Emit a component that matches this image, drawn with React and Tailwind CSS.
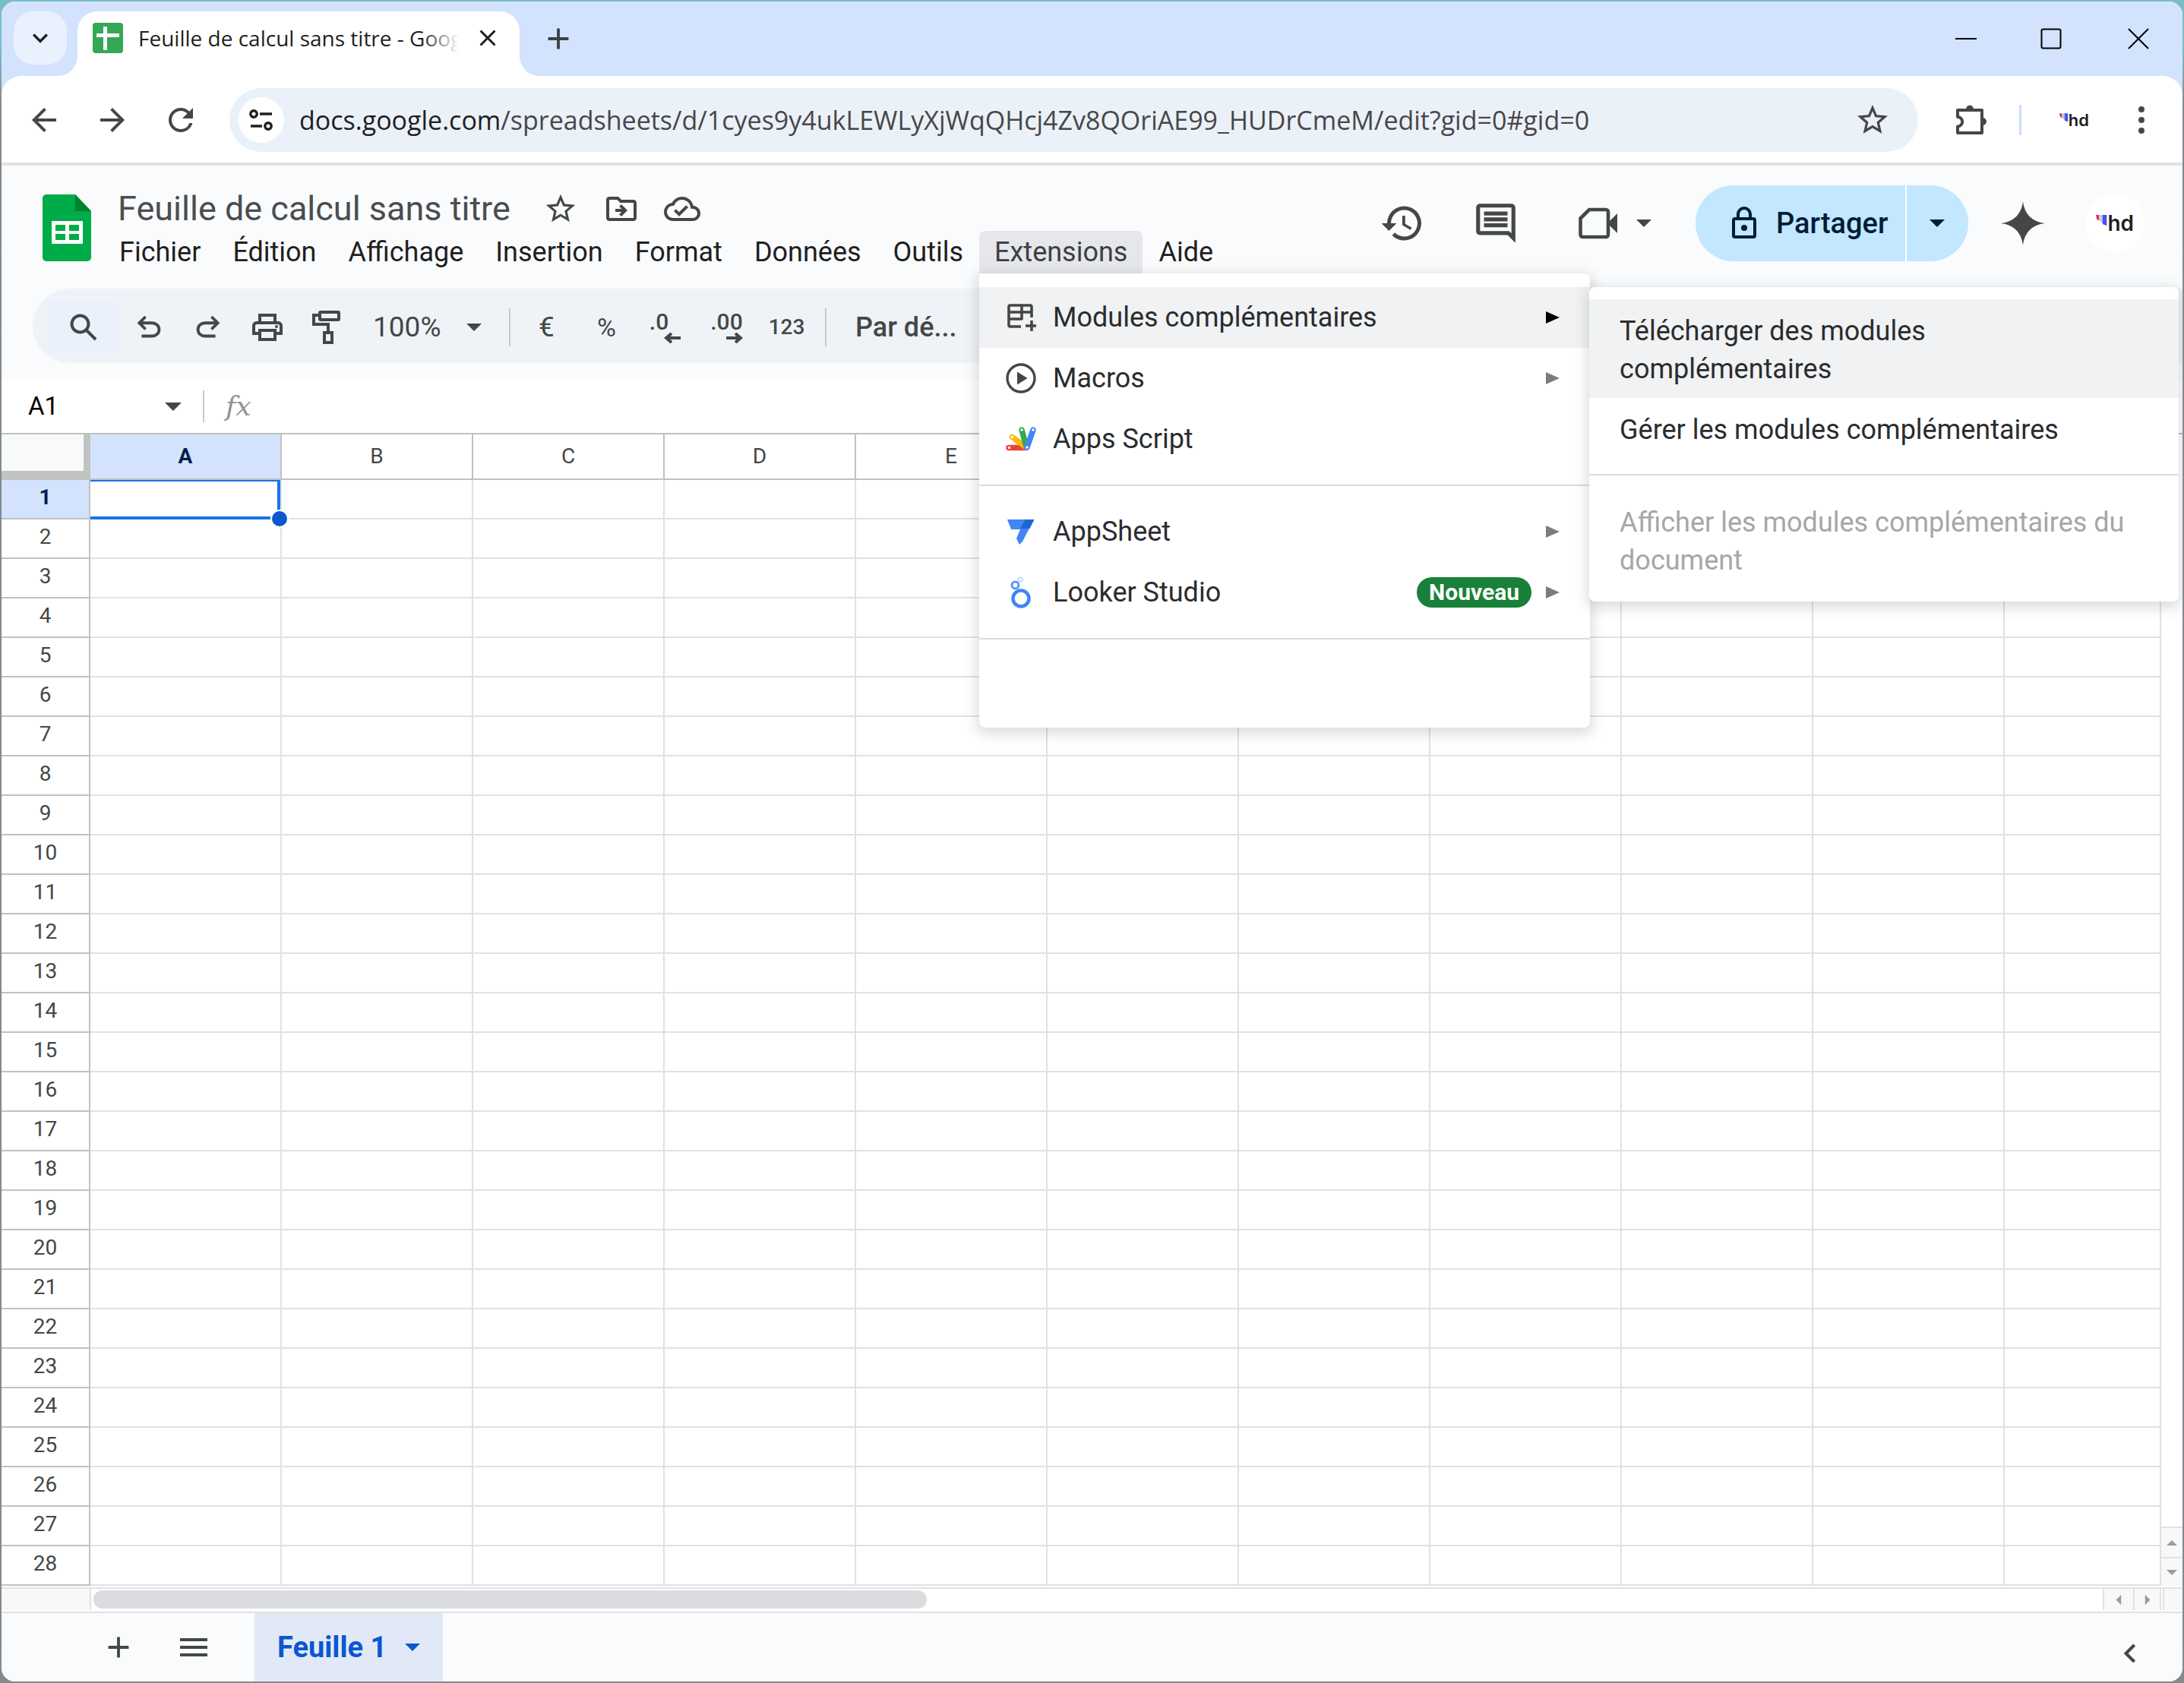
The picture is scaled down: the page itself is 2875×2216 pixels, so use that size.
import React from "react";
import {
  MdStarBorder,
  MdOutlineDriveFileMove,
  MdOutlineCloudDone,
  MdHistory,
  MdOutlineComment,
  MdOutlinePrint,
  MdAdd,
  MdMenu,
  MdArrowBack,
  MdArrowForward,
  MdRefresh,
  MdClose,
  MdChevronLeft,
  MdKeyboardArrowDown,
} from "react-icons/md";

const columns = ["A", "B", "C", "D", "E", "F", "G", "H", "I", "J", ""];
const rows = Array.from({ length: 28 }, (_, i) => i + 1);
const menus = ["Fichier", "Édition", "Affichage", "Insertion", "Format", "Données", "Outils"];

function Caret({ className = "w-5" }) {
  return (
    <svg viewBox="0 0 20 10" className={className} fill="currentColor" aria-hidden="true">
      <path d="M0 0h20L10 10z" />
    </svg>
  );
}

function Brand({ className, textClass }) {
  return (
    <span className={className}>
      <svg viewBox="0 0 14 24" className="h-[1em] w-[0.55em]" aria-hidden="true">
        <path d="M0 2h4v7L1 7z" fill="#e0344a" />
        <path d="M5 2h3v10L5 9z" fill="#b4c0f8" />
        <path d="M8 2h5v13l-5-2z" fill="#4454f0" />
      </svg>
      <span className={textClass}>hd</span>
    </span>
  );
}

function TabStrip() {
  return (
    <div className="flex h-[98px] items-stretch bg-[#d3e3fd] pl-4">
      <button aria-label="Rechercher dans les onglets" className="mt-[13px] flex h-[70px] w-[70px] items-center justify-center rounded-[26px] bg-[#e9f1fe] text-[#1f1f1f]">
        <MdKeyboardArrowDown className="size-10" />
      </button>
      <div className="relative ml-[14px] mt-[13px] flex w-[582px] items-center rounded-t-[26px] bg-white pb-4 pl-5 pr-6">
        <svg viewBox="0 0 26 26" className="absolute bottom-0 -left-[26px] w-[26px]" fill="#fff" aria-hidden="true">
          <path d="M26 0v26H0A26 26 0 0 0 26 0z" />
        </svg>
        <svg viewBox="0 0 26 26" className="absolute bottom-0 -right-[26px] w-[26px]" fill="#fff" aria-hidden="true">
          <path d="M0 0v26h26A26 26 0 0 1 0 0z" />
        </svg>
        <svg viewBox="0 0 40 40" className="w-10 shrink-0" aria-hidden="true">
          <rect width="40" height="40" rx="4" fill="#34a853" />
          <path d="M14 5h5v9h16v5H19v17h-5V19H5v-5h9z" fill="#fff" />
        </svg>
        <div className="relative ml-5 flex-1 overflow-hidden whitespace-nowrap font-['Open_Sans',sans-serif] text-[28px] leading-10 text-[#1f1f1f]">
          Feuille de calcul sans titre - Google Sheets
          <div className="absolute inset-y-0 right-0 w-12 bg-gradient-to-r from-white/0 to-white" />
        </div>
        <button aria-label="Fermer l'onglet" className="ml-5 text-[#1f1f1f]">
          <MdClose className="size-9" />
        </button>
      </div>
      <button aria-label="Nouvel onglet" className="ml-7 flex items-center text-[#3c4043]">
        <MdAdd className="size-[46px]" />
      </button>
      <div className="ml-auto flex items-center gap-[84px] pr-[44px] text-black">
        <button aria-label="Réduire">
          <svg viewBox="0 0 28 28" className="w-7"><path d="M0 14h28" stroke="currentColor" strokeWidth="2" /></svg>
        </button>
        <button aria-label="Agrandir">
          <svg viewBox="0 0 28 28" className="w-7"><rect x="1.5" y="1.5" width="25" height="25" rx="2" fill="none" stroke="currentColor" strokeWidth="2" /></svg>
        </button>
        <button aria-label="Fermer" className="ml-[3px]">
          <svg viewBox="0 0 28 28" className="w-7"><path d="M1 1l26 26M27 1L1 27" stroke="currentColor" strokeWidth="2" /></svg>
        </button>
      </div>
    </div>
  );
}

function AddressBar() {
  return (
    <div className="bg-[#d3e3fd]">
      <div className="flex h-[118px] items-center rounded-t-[26px] border-b-4 border-[#dfe2e1] bg-white pl-8 pr-8 pt-[2px] text-[#454746]">
        <button aria-label="Retour" className="mr-[42px]"><MdArrowBack className="size-12" /></button>
        <button aria-label="Avancer" className="mr-[42px]"><MdArrowForward className="size-12" /></button>
        <button aria-label="Actualiser" className="mr-[40px]"><MdRefresh className="size-12" /></button>
        <div className="flex h-[84px] flex-1 items-center rounded-full bg-[#ebf1f9] pl-3 pr-9">
          <button aria-label="Informations sur le site" className="flex size-[60px] items-center justify-center rounded-full bg-white text-[#1f1f1f]">
            <svg viewBox="0 0 32 32" className="w-8" fill="none" stroke="currentColor" strokeWidth="3.4">
              <circle cx="6" cy="8" r="4.2" />
              <path d="M14 8h16M2 24h15" />
              <circle cx="25" cy="24" r="4.2" />
            </svg>
          </button>
          <button className="ml-5 flex-1 whitespace-nowrap text-left font-['Open_Sans',sans-serif] text-[34px] leading-[48px] text-[#474747]">
            <span className="text-[#1f1f1f]">docs.google.com</span>/spreadsheets/d/1cyes9y4ukLEWLyXjWqQHcj4Zv8QOriAE99_HUDrCmeM/edit?gid=0#gid=0
          </button>
          <button aria-label="Ajouter aux favoris"><MdStarBorder className="size-[48px]" /></button>
        </div>
        <button aria-label="Extensions du navigateur" className="ml-[47px]">
          <svg viewBox="0 0 44 44" className="w-11">
            <path d="M5 9h32v30H5v-8.500a5 5 0 0 0 0-12.500z" fill="none" stroke="currentColor" strokeWidth="4" strokeLinejoin="round" />
            <path d="M16 8a5 5.500 0 0 1 10 0zM38 19a5 5 0 0 1 0 10z" fill="currentColor" />
          </svg>
        </button>
        <div className="ml-[42px] h-10 w-[3px] bg-[#c8dcfb]" />
        <button aria-label="Profil" className="ml-[50px]">
          <Brand className="flex items-center text-[22px] leading-6" textClass="font-['Inter',sans-serif] font-semibold text-[#1f1f1f]" />
        </button>
        <button aria-label="Menu du navigateur" className="ml-[47px]">
          <svg viewBox="0 0 44 44" className="w-11" fill="currentColor"><circle cx="22" cy="8" r="4" /><circle cx="22" cy="22" r="4" /><circle cx="22" cy="36" r="4" /></svg>
        </button>
      </div>
    </div>
  );
}

function SheetsLogo() {
  return (
    <svg viewBox="0 0 64 88" className="w-16" aria-hidden="true">
      <path d="M5 0h38l21 22v61a5 5 0 0 1-5 5H5a5 5 0 0 1-5-5V5a5 5 0 0 1 5-5z" fill="#00ac47" />
      <path d="M43 0l21 22H43z" fill="#00832d" />
      <path d="M12 35h41v30H12zM17 40v8h13v-8zm18 0v8h13v-8zM17 52v8h13v-8zm18 0v8h13v-8z" fill="#fff" fillRule="evenodd" />
    </svg>
  );
}

function ModulesIcon() {
  return (
    <svg viewBox="0 0 40 40" className="w-10" fill="none" stroke="#444746" strokeWidth="3.600" strokeLinejoin="round">
      <path d="M34 20V6a2 2 0 0 0-2-2H6a2 2 0 0 0-2 2v24a2 2 0 0 0 2 2h14M4 13h30M4 22h17V4" />
      <path d="M34 24v14M26 31h14" />
    </svg>
  );
}
function MacrosIcon() {
  return (
    <svg viewBox="0 0 40 40" className="w-10">
      <circle cx="20" cy="20" r="18" fill="none" stroke="#444746" strokeWidth="3.400" />
      <path d="M15 11.500v17L28.500 20z" fill="#444746" />
    </svg>
  );
}
function AppsScriptIcon() {
  return (
    <svg viewBox="0 0 40 40" className="w-10" strokeLinecap="round" strokeWidth="7.500">
      <path d="M4 31.500H26" stroke="#ea4335" />
      <path d="M8.500 17.500l18 13" stroke="#fbbc04" />
      <path d="M21 8l6 22" stroke="#34a853" />
      <path d="M36 8l-8 23" stroke="#4285f4" />
      <g fill="#fff"><circle cx="4.500" cy="31.500" r="1.800" /><circle cx="8.500" cy="17.500" r="1.800" /><circle cx="21" cy="8" r="1.800" /><circle cx="36" cy="8" r="1.800" /><circle cx="28" cy="31" r="1.800" /></g>
    </svg>
  );
}
function AppSheetIcon() {
  return (
    <svg viewBox="0 0 40 40" className="w-10">
      <path d="M2 4h35L22 33l-4 4-4-8 5-12H7z" fill="#4285f4" />
      <path d="M26 4h11.500l-6 12H19z" fill="#1967d2" />
    </svg>
  );
}
function LookerIcon() {
  return (
    <svg viewBox="0 0 40 44" className="w-10" fill="none">
      <circle cx="20" cy="30" r="10.500" stroke="#4285f4" strokeWidth="4.500" />
      <circle cx="12.500" cy="12.500" r="4.500" stroke="#5e97f6" strokeWidth="3" />
      <circle cx="19" cy="5" r="2.800" stroke="#c6dafc" strokeWidth="2" />
    </svg>
  );
}

function MenuItem({ icon, label, arrow, active, badge, children }) {
  return (
    <li className="relative">
      <button className={active ? "flex h-20 w-full items-center bg-[#f0f2f3] pl-[35px] pr-[39px] text-left" : "flex h-20 w-full items-center bg-white pl-[35px] pr-[39px] text-left"}>
        {icon}
        <span className="ml-[22px] flex-1">{label}</span>
        {badge && <span className="mr-[18px] flex h-10 items-center rounded-full bg-[#188038] px-4 text-[30px] font-bold text-white">{badge}</span>}
        {arrow && (
          <svg viewBox="0 0 20 18" className="w-5" fill={active ? "#000" : "#7c7c7c"} aria-hidden="true"><path d="M1 1l18 8-18 8z" /></svg>
        )}
      </button>
      {children}
    </li>
  );
}

function ExtensionsMenu() {
  return (
    <ul className="absolute left-0 top-full z-20 w-[804px] rounded-b-lg rounded-tr-lg bg-white pb-[116px] pt-[18px] text-[36px] leading-[50px] text-[#2b2c2e] shadow-[0_5px_16px_4px_rgba(60,64,67,0.17)]">
      <MenuItem icon={<ModulesIcon />} label="Modules complémentaires" arrow active>
        <ul className="absolute left-[803px] top-0 z-30 w-[776px] rounded-lg bg-white py-4 shadow-[0_5px_16px_4px_rgba(60,64,67,0.17)]">
          <li><button className="w-full bg-[#f0f2f3] pb-[13px] pl-10 pr-[60px] pt-[17px] text-left">Télécharger des modules<br />complémentaires</button></li>
          <li><button className="w-full pb-[13px] pl-10 pt-[17px] text-left">Gérer les modules complémentaires</button></li>
          <li className="my-5 h-[2px] bg-[#dadce0]" />
          <li><button disabled className="w-full pb-[13px] pl-10 pr-10 pt-[17px] text-left text-[#a5a7a8]">Afficher les modules complémentaires du document</button></li>
        </ul>
      </MenuItem>
      <MenuItem icon={<MacrosIcon />} label="Macros" arrow />
      <MenuItem icon={<AppsScriptIcon />} label="Apps Script" />
      <li className="my-5 h-[2px] bg-[#dadce0]" />
      <MenuItem icon={<AppSheetIcon />} label="AppSheet" arrow />
      <MenuItem icon={<LookerIcon />} label="Looker Studio" badge="Nouveau" arrow />
      <li className="mt-5 h-[2px] bg-[#dadce0]" />
    </ul>
  );
}

function DocHeader() {
  return (
    <div className="flex h-[162px] items-start pl-[54px] pr-[50px] text-[#444746]">
      <div className="pt-[38px]"><SheetsLogo /></div>
      <div className="ml-4 pt-[28px]">
        <div className="flex h-[58px] items-center pl-[19px]">
          <input aria-label="Titre du document" defaultValue="Feuille de calcul sans titre" className="w-[560px] bg-transparent text-[45px] leading-[58px] text-[#4b4d4f] outline-none" />
          <button aria-label="Ajouter aux favoris"><MdStarBorder className="size-[46px]" /></button>
          <button aria-label="Déplacer" className="ml-[33px]"><MdOutlineDriveFileMove className="size-[48px]" /></button>
          <button aria-label="Enregistré dans Drive" className="ml-8"><MdOutlineCloudDone className="size-[48px]" /></button>
        </div>
        <nav className="flex h-[56px] text-[36px] leading-[56px] text-[#1f1f1f]">
          {menus.map((m) => (
            <button key={m} className="px-[21px]">{m}</button>
          ))}
          <div className="relative">
            <button className="h-full rounded-t-lg bg-[#e6e7ea] px-5 text-[#3c4043]">Extensions</button>
            <ExtensionsMenu />
          </div>
          <button className="px-[21px]">Aide</button>
        </nav>
      </div>
      <div className="ml-auto mt-[26px] flex h-[100px] items-center">
        <button aria-label="Historique"><MdHistory className="size-[60px]" /></button>
        <button aria-label="Commentaires" className="ml-[62px]"><MdOutlineComment className="size-[62px]" /></button>
        <button aria-label="Visioconférence" className="ml-[78px] flex items-center">
          <svg viewBox="0 0 52 42" className="w-[52px]">
            <path d="M14 3h22a3 3 0 0 1 3 3v30a3 3 0 0 1-3 3H5.500a3 3 0 0 1-3-3V14.500z" fill="none" stroke="currentColor" strokeWidth="4.600" />
            <path d="M40 19l11-11v26L40 23z" fill="currentColor" />
          </svg>
          <Caret className="ml-6 w-5" />
        </button>
        <div className="ml-[58px] flex h-[100px] overflow-hidden rounded-full bg-[#c2e7ff] text-[#001d35]">
          <button className="flex w-[276px] items-center pl-[44px] text-[38px] font-medium">
            <svg viewBox="0 0 40 44" className="mr-[22px] w-10" fill="none" stroke="currentColor" strokeWidth="4">
              <rect x="6" y="16" width="28" height="24" rx="2" />
              <path d="M12 16v-6a8 8 0 0 1 16 0v6" />
              <circle cx="20" cy="28" r="4" fill="currentColor" stroke="none" />
            </svg>
            Partager
          </button>
          <button aria-label="Options de partage" className="flex w-[83px] items-center border-l-2 border-white pl-[30px]"><Caret className="w-5" /></button>
        </div>
        <button aria-label="Gemini" className="ml-[43px]">
          <svg viewBox="0 0 58 58" className="w-[58px]" fill="currentColor"><path d="M29 0c2 17 12 27 29 29-17 2-27 12-29 29C27 41 17 31 0 29 17 27 27 17 29 0z" /></svg>
        </button>
        <button aria-label="Compte" className="ml-[53px] flex size-[78px] items-center justify-center rounded-full bg-white">
          <Brand className="flex items-center text-[28px] leading-8" textClass="font-['Inter',sans-serif] font-semibold text-[#1f1f1f]" />
        </button>
      </div>
    </div>
  );
}

function Decimal({ text, right }) {
  return (
    <span className="flex flex-col items-end text-[30px] font-medium leading-[28px]">
      <span>{text}</span>
      <svg viewBox="0 0 22 14" className={right ? "w-[22px]" : "-mr-4 w-[22px]"} fill="none" stroke="currentColor" strokeWidth="4">
        {right ? <path d="M0 7h19M12 1l7 6-7 6" /> : <path d="M22 7H3M10 1L3 7l7 6" />}
      </svg>
    </span>
  );
}

function Toolbar() {
  return (
    <div className="ml-[41px] flex h-[98px] items-center rounded-l-full bg-[#eff3f8] pl-5 pt-1 text-[#444746]">
      <button aria-label="Rechercher dans les menus" className="flex h-[70px] w-[94px] items-center justify-center bg-[#eaf1fb]">
        <svg viewBox="0 0 36 36" className="w-9" fill="none" stroke="currentColor" strokeWidth="4">
          <circle cx="13.500" cy="13.500" r="11" />
          <path d="M21.500 21.500L34 34" />
        </svg>
      </button>
      <button aria-label="Annuler" className="flex w-[78px] justify-center">
        <svg viewBox="0 0 24 24" className="w-[46px]" fill="currentColor"><path d="M7 19v-2h7.100q1.575 0 2.738-1T18 13.500 16.838 11 14.100 10H7.800l2.600 2.600L9 14 4 9l5-5 1.400 1.400L7.800 8h6.300q2.425 0 4.163 1.575T20 13.500t-1.737 3.925T14.100 19z" /></svg>
      </button>
      <button aria-label="Rétablir" className="flex w-[78px] justify-center">
        <svg viewBox="0 0 24 24" className="w-[46px]" fill="currentColor"><path d="M9.900 19q-2.425 0-4.162-1.575T4 13.500t1.738-3.925T9.900 8h6.300l-2.600-2.600L15 4l5 5-5 5-1.400-1.400 2.600-2.600H9.900q-1.575 0-2.737 1T6 13.500 7.163 16t2.737 1H17v2z" /></svg>
      </button>
      <button aria-label="Imprimer" className="flex w-[78px] justify-center"><MdOutlinePrint className="size-[48px]" /></button>
      <button aria-label="Reproduire la mise en forme" className="flex w-[78px] justify-center">
        <svg viewBox="0 0 38 46" className="w-[38px]" fill="none" stroke="currentColor" strokeWidth="4">
          <rect x="10" y="3" width="25" height="10" rx="1" />
          <path d="M10 7H2v12h19v10" />
          <rect x="16" y="30" width="10" height="13" />
        </svg>
      </button>
      <button className="flex w-[201px] items-center pl-[22px] text-[37px]">100%<Caret className="ml-[34px] w-5" /></button>
      <div className="h-[50px] w-[2px] bg-[#c7c9cc]" />
      <button className="ml-2 w-[79px] text-[37px]">€</button>
      <button className="w-[79px] text-[34px]">%</button>
      <button aria-label="Réduire le nombre de décimales" className="flex w-[79px] justify-center pr-5"><Decimal text=".0" /></button>
      <button aria-label="Augmenter le nombre de décimales" className="flex w-[79px] justify-center"><Decimal text=".00" right /></button>
      <button className="w-[79px] text-[28px] font-medium">123</button>
      <div className="ml-[11px] h-[50px] w-[2px] bg-[#c7c9cc]" />
      <button className="ml-[38px] text-[36px] font-medium">Par dé...</button>
    </div>
  );
}

function FormulaBar() {
  return (
    <div className="flex h-[70px] items-center bg-white pl-[35px] text-[#444746]">
      <input aria-label="Zone de nom" defaultValue="A1" className="w-[180px] text-[33px] leading-10 text-black outline-none" />
      <button aria-label="Plages" className="flex items-center"><Caret className="w-[22px]" /></button>
      <div className="ml-[28px] h-[42px] w-[2px] bg-[#c7c9cc]" />
      <label htmlFor="formula" className="ml-7 font-['DejaVu_Serif',serif] text-[36px] italic leading-10 text-[#8f9294]">fx</label>
      <input id="formula" className="ml-4 flex-1 outline-none" />
    </div>
  );
}

function Grid() {
  return (
    <div className="flex border-t-2 border-[#bfc1c0]">
      <table className="min-w-0 flex-1 table-fixed border-separate border-spacing-0 text-[28px] leading-8 text-[#444746]">
        <colgroup>
          <col className="w-[117px]" />
          {columns.map((c, i) => (
            <col key={i} className={c ? "w-[252px]" : "w-auto"} />
          ))}
        </colgroup>
        <thead>
          <tr className="h-[60px]">
            <th aria-label="Tout sélectionner" className="border-b-[12px] border-r-[9px] border-[#c1c3c2] bg-[#f8f9fa] p-0" />
            {columns.map((c, i) => (
              <th
                key={i}
                scope="col"
                className={i === 0 ? "border-b-2 border-r-2 border-[#c0c2c1] bg-[#d3e3fd] p-0 font-bold text-[#041e49]" : "border-b-2 border-r-2 border-[#c0c2c1] p-0 font-normal"}
              >
                {c}
              </th>
            ))}
          </tr>
        </thead>
        <tbody>
          {rows.map((r) => (
            <tr key={r} className="h-[52px]">
              <th
                scope="row"
                className={r === 1 ? "border-b-2 border-r-2 border-[#c0c2c1] bg-[#d3e3fd] p-0 pb-1 font-bold text-[#041e49]" : "border-b-2 border-r-2 border-[#c0c2c1] p-0 pb-1 font-normal"}
              >
                {r}
              </th>
              {columns.map((c, i) => (
                <td key={i} className="relative border-b-2 border-r-2 border-[#e1e1e1] p-0">
                  {r === 1 && i === 0 && (
                    <>
                      <span className="absolute inset-x-0 -bottom-[2px] top-0 border-b-4 border-r-4 border-t-2 border-[#1a73e8]" />
                      <span className="absolute -bottom-[13px] -right-[11px] z-10 size-6 rounded-full border-2 border-white bg-[#0b57d0]" />
                    </>
                  )}
                </td>
              ))}
            </tr>
          ))}
        </tbody>
      </table>
      <div className="flex w-[28px] flex-col justify-end text-[#9a9b9c]">
        <button aria-label="Défiler vers le haut" className="flex h-10 items-center justify-center border-t-2 border-[#e1e1e1] bg-[#f8f8f8]"><Caret className="w-[14px] rotate-180" /></button>
        <button aria-label="Défiler vers le bas" className="flex h-[38px] items-center justify-center border-t-2 border-[#e1e1e1] bg-[#f8f8f8]"><Caret className="w-[14px]" /></button>
      </div>
    </div>
  );
}

function BottomBar() {
  return (
    <>
      <div className="mt-[2px] flex h-8 border-t-2 border-[#e1e1e1] pb-[2px] text-[#9a9b9c]">
        <div className="w-[118px] border-r-2 border-[#e1e1e1] bg-[#f8f8f8]" />
        <div className="flex-1 pl-[3px] pt-[2px]"><div className="h-6 w-[1097px] rounded-full bg-[#dadce0]" /></div>
        <button aria-label="Défiler vers la gauche" className="flex w-10 items-center justify-center border-l-2 border-[#e1e1e1] bg-[#f8f8f8]"><Caret className="w-[14px] rotate-90" /></button>
        <button aria-label="Défiler vers la droite" className="flex w-[37px] items-center justify-center border-x-2 border-[#e1e1e1] bg-[#f8f8f8]"><Caret className="w-[14px] -rotate-90" /></button>
        <div className="ml-[2px] w-[26px] border-l-2 border-[#e1e1e1] bg-[#f8f8f8]" />
      </div>
      <div className="flex h-[92px] items-stretch border-t-2 border-[#e1e1e1] bg-[#f9fbfd] pl-[131px] pr-[44px] text-[#444746]">
        <button aria-label="Ajouter une feuille"><MdAdd className="size-[46px]" /></button>
        <button aria-label="Toutes les feuilles" className="ml-[52px]"><MdMenu className="size-[48px]" /></button>
        <button className="ml-[56px] flex w-[248px] items-center bg-[#e1e9f7] pl-[30px] text-[38px] font-bold text-[#0b57d0]">
          Feuille 1<Caret className="ml-6 w-5" />
        </button>
        <button aria-label="Afficher le panneau latéral" className="ml-auto pt-4"><MdChevronLeft className="size-[50px]" /></button>
      </div>
    </>
  );
}

export default function App() {
  return (
    <div className="min-h-screen w-full bg-gradient-to-b from-[#79bcc6] from-[3%] to-[#85898b] to-[6%] p-[2px] font-['Roboto',sans-serif]">
      <div className="overflow-hidden rounded-[18px] bg-white">
        <TabStrip />
        <AddressBar />
        <header className="bg-[#f9fbfd] pb-[22px]">
          <DocHeader />
          <Toolbar />
        </header>
        <FormulaBar />
        <Grid />
        <BottomBar />
      </div>
    </div>
  );
}
